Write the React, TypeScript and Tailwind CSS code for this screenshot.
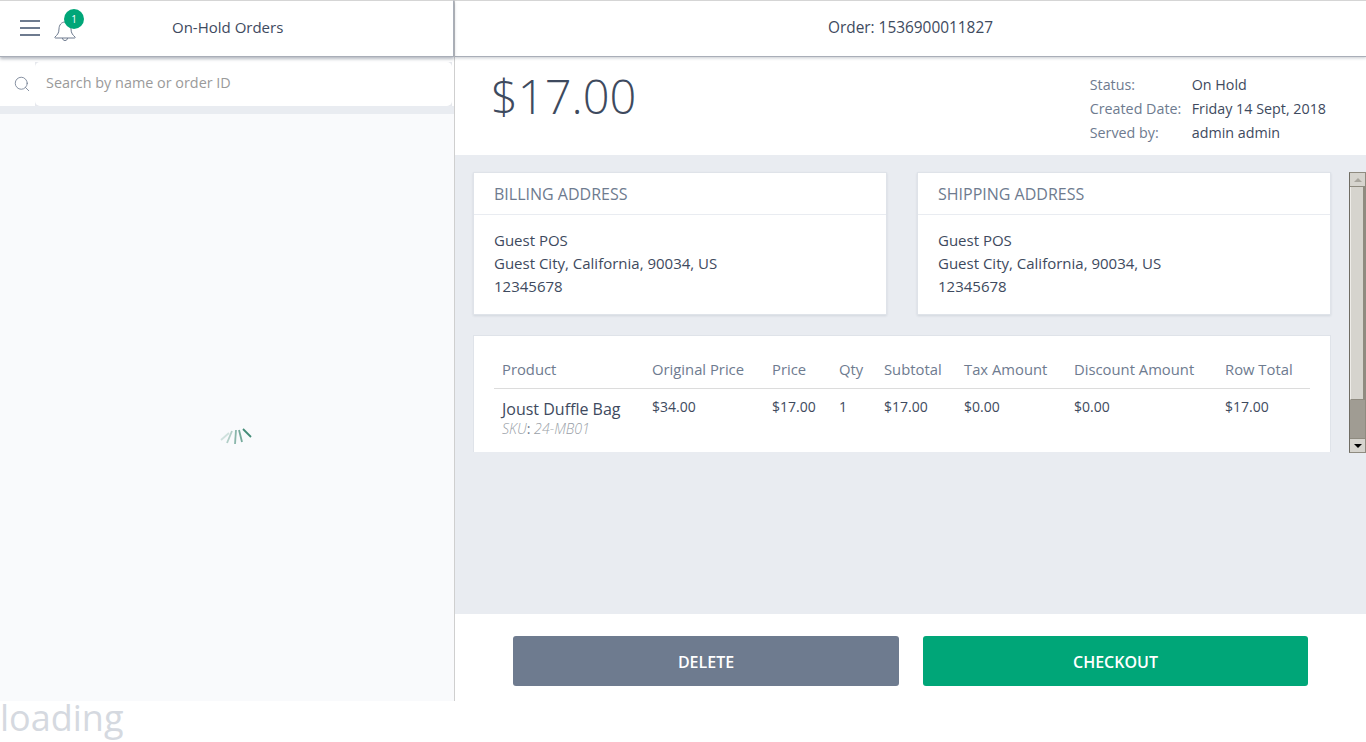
import { Search } from "lucide-react";

const COLS = "grid grid-cols-[150px_120px_67px_45px_80px_110px_151px_93px]";

const HEADERS = ["Product", "Original Price", "Price", "Qty", "Subtotal", "Tax Amount", "Discount Amount", "Row Total"];
const VALUES = ["$34.00", "$17.00", "1", "$17.00", "$0.00", "$0.00", "$17.00"];

function AddressCard({ title }: { title: string }) {
  return (
    <div className="w-[414px] h-[143px] bg-white border border-[#dfe3e9] shadow-[0_1px_2px_rgba(60,70,90,0.12)]">
      <div className="h-[42px] border-b border-[#e9ecf1] pl-5 text-[16px] leading-[42px] text-[#6e7b8f]">{title}</div>
      <div className="pt-[14px] pl-5 text-[15px] leading-[23px] text-[#3e4a5e]">
        <div>Guest POS</div>
        <div>Guest City, California, 90034, US</div>
        <div>12345678</div>
      </div>
    </div>
  );
}

function BellIcon() {
  return (
    <svg width="24" height="22" viewBox="0 0 24 22" fill="none" stroke="#6e7b8f" strokeWidth="1">
      <path d="M2 17c2-2 4-3.5 4-8 0-4 2.5-7 6-7s6 3 6 7c0 4.5 2 6 4 8 .5.6 0 1-.5 1h-19c-.5 0-1-.4-.5-1z" />
      <path d="M9.5 18c0 1.5 1 2.5 2.5 2.5s2.5-1 2.5-2.5" />
    </svg>
  );
}

function Spinner() {
  // fading rays, darkest on the right
  const rays = [
    { x1: 221, y1: 440, x2: 229, y2: 433, o: 0.2 },
    { x1: 227, y1: 443, x2: 232, y2: 431, o: 0.35 },
    { x1: 235, y1: 444, x2: 236, y2: 430, o: 0.55 },
    { x1: 242, y1: 442, x2: 239, y2: 430, o: 0.65 },
    { x1: 251, y1: 437, x2: 243, y2: 429, o: 0.9 },
  ];
  return (
    <svg width="36" height="20" viewBox="218 426 36 20">
      {rays.map((r, i) => (
        <line key={i} x1={r.x1} y1={r.y1} x2={r.x2} y2={r.y2} stroke="#2f7f68" strokeWidth="1.8" opacity={r.o} />
      ))}
    </svg>
  );
}

function Scrollbar() {
  return (
    <div className="w-[17px] h-[281px] flex flex-col border border-[#8f8b80] border-l-[#6f6c63] bg-[#a09c93]">
      <div className="h-[14px] bg-[#d6d4ce] border-b border-[#8f8b80] flex items-center justify-center">
        <div className="w-0 h-0 border-x-[4px] border-x-transparent border-b-[4px] border-b-[#a9a69e]" />
      </div>
      <div className="h-[213px] bg-[#d6d4ce] border-r-2 border-b border-[#8f8b80] border-l border-l-[#eeece8]" />
      <div className="flex-1" />
      <div className="h-[14px] bg-[#d6d4ce] border-t border-[#8f8b80] flex items-center justify-center">
        <div className="w-0 h-0 border-x-[4px] border-x-transparent border-t-[4px] border-t-black" />
      </div>
    </div>
  );
}

export default function App() {
  return (
    <div className="w-[1366px] h-[742px] overflow-hidden bg-white font-['Open_Sans','Noto_Sans',sans-serif] text-[#3e4a5e]">
      <div className="flex h-[701px]">
        {/* left column */}
        <div className="w-[455px] flex flex-col border-r border-[#cfcfcf]">
          <div className="h-[57px] flex items-center border-t border-[#d5d5d5] border-b border-b-[#a9aeb8] border-r border-r-[#a9aeb8] shadow-[0_2px_3px_rgba(70,80,100,0.4)] bg-white relative z-10">
            <div className="ml-5 w-5 flex flex-col gap-[5px] -mt-[1px]">
              <div className="h-[2px] bg-[#6e7b8f]" />
              <div className="h-[2px] bg-[#6e7b8f]" />
              <div className="h-[2px] bg-[#6e7b8f]" />
            </div>
            <div className="relative ml-[13px] mt-[4px]">
              <BellIcon />
              <div className="absolute -top-[11px] left-[11px] w-5 h-5 rounded-full bg-[#00a678] text-white text-[10px] leading-5 text-center">1</div>
            </div>
            <div className="ml-[95px] -mt-[2px] text-[15px] leading-none">On-Hold Orders</div>
          </div>
          <div className="mt-[5px] h-[44px] flex bg-[#e6e8ed]">
            <div className="w-[35px] bg-white flex items-center">
              <Search size={18} strokeWidth={1.1} className="ml-[13px] text-[#6e7b8f]" />
            </div>
            <div className="w-[417px] rounded-[5px] bg-white pl-[11px] text-[14.4px] leading-[41px] text-[#9a9a9a]">Search by name or order ID</div>
            <div className="flex-1 bg-white" />
          </div>
          <div className="h-2 bg-[#e9ecf1]" />
          <div className="flex-1 bg-[#f9fafc] flex items-center justify-center pl-[18px] pt-[56px]">
            <Spinner />
          </div>
        </div>

        {/* right column */}
        <div className="flex-1 flex flex-col">
          <div className="h-[57px] flex items-center justify-center border-t border-[#d5d5d5] border-b border-b-[#a9aeb8] shadow-[0_1px_3px_rgba(70,80,100,0.3)] text-[15.4px] pb-[2px] bg-white relative">
            Order: 1536900011827
          </div>
          <div className="h-[98px] flex justify-between bg-white">
            <div className="ml-[36px] mt-[8px] text-[47px] leading-[62px] font-light text-[#3e4a5e]">$17.00</div>
            <div className="mt-4 mr-10 grid grid-cols-[102px_auto] text-[14.3px] leading-6 h-[72px]">
              <span className="text-[#6e7b8f]">Status:</span>
              <span>On Hold</span>
              <span className="text-[#6e7b8f]">Created Date:</span>
              <span>Friday 14 Sept, 2018</span>
              <span className="text-[#6e7b8f]">Served by:</span>
              <span>admin admin</span>
            </div>
          </div>
          <div className="flex-1 bg-[#e9ecf1] pt-[17px] pl-[18px] flex gap-[18px]">
            <div className="w-[858px] flex flex-col gap-5">
              <div className="flex gap-[30px]">
                <AddressCard title="BILLING ADDRESS" />
                <AddressCard title="SHIPPING ADDRESS" />
              </div>
              <div className="h-[117px] bg-white border border-[#dfe3e9] border-b-0 px-5 pt-[19px]">
                <div className={`${COLS} h-[34px] border-b border-[#dcdcdc] text-[14.8px] leading-[28px] text-[#6e7b8f]`}>
                  {HEADERS.map((h) => (
                    <div key={h} className="pl-2 whitespace-nowrap">{h}</div>
                  ))}
                </div>
                <div className={`${COLS} pt-[8px] text-[14px] leading-5`}>
                  <div className="pl-2">
                    <div className="text-[16px] leading-[24px]">Joust Duffle Bag</div>
                    <div className="text-[14.2px] leading-[16px] text-[#6e7b8f]">
                      <i className="font-light text-[#9a9fa8]">SKU</i>: <i className="font-light text-[#9a9fa8]">24-MB01</i>
                    </div>
                  </div>
                  {VALUES.map((v, i) => (
                    <div key={i} className="pl-2">{v}</div>
                  ))}
                </div>
              </div>
            </div>
            <Scrollbar />
          </div>
          <div className="h-[87px] bg-white flex items-start gap-6 pt-[22px] pl-[58px]">
            <div className="w-[386px] h-[50px] rounded-[3px] bg-[#6e7b8f] text-white text-[16px] font-semibold leading-[52px] text-center">DELETE</div>
            <div className="w-[385px] h-[50px] rounded-[3px] bg-[#00a678] text-white text-[16px] font-semibold leading-[52px] text-center">CHECKOUT</div>
          </div>
        </div>
      </div>
      <div className="text-[36px] leading-[36px] -mt-[1px] text-[#d5d9e0]">loading</div>
    </div>
  );
}
